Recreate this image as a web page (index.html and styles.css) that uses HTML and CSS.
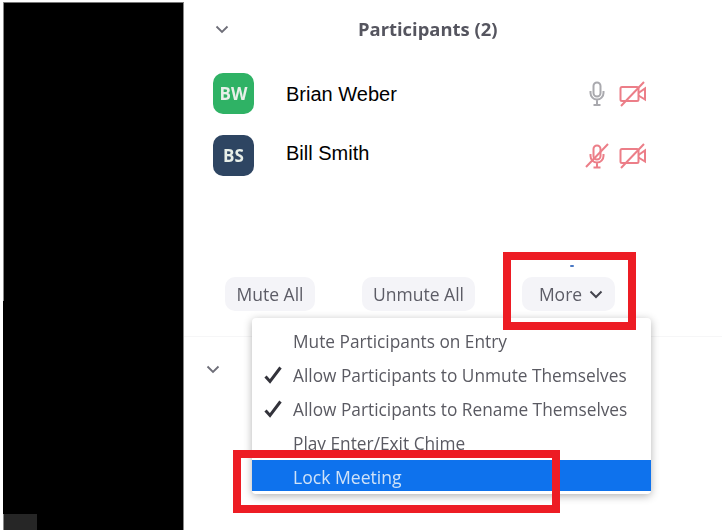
FILE: index.html
```html
<!DOCTYPE html>
<html lang="en">
  <head>
    <meta charset="UTF-8" />
    <title>Participants</title>
    <link rel="stylesheet" href="styles.css">
  </head>
  <body>
    <div class="redacted">
      <div class="redacted-edge"></div>
      <div class="redacted-corner"></div>
    </div>

    <div class="panel">
      <div class="panel-header">
        <svg class="chevron" width="14" height="9" viewBox="0 0 14 9"><path d="M1.5 1.5 7 7l5.5-5.5" /></svg>
        <span class="panel-title">Participants (2)</span>
      </div>

      <div class="participant participant-first">
        <div class="avatar avatar-green">BW</div>
        <span class="name">Brian Weber</span>
        <div class="status-icons">
          <svg width="24" height="26" viewBox="0 0 24 26" class="icon-mic">
            <rect x="8.500" y="1.500" width="7" height="14" rx="3.500" />
            <path d="M5.500 10v2a6.500 6.500 0 0 0 13 0v-2M12 18.500v5M8.500 24h7" />
          </svg>
          <svg width="28" height="26" viewBox="0 0 28 26" class="icon-off">
            <rect x="1.500" y="6" width="18" height="14" rx="1.500" />
            <path d="M19.500 12 26 7.500v11L19.500 14.500M2 25 25 1" />
          </svg>
        </div>
      </div>

      <div class="participant">
        <div class="avatar avatar-navy">BS</div>
        <span class="name name-second">Bill Smith</span>
        <div class="status-icons">
          <svg width="24" height="26" viewBox="0 0 24 26" class="icon-off">
            <rect x="8.500" y="2.500" width="7" height="14" rx="3.500" />
            <path d="M5.500 11v2a6.500 6.500 0 0 0 13 0v-2M12 19v5M8.500 24.500h7M1 24 23 1" />
          </svg>
          <svg width="28" height="26" viewBox="0 0 28 26" class="icon-off">
            <rect x="1.500" y="6" width="18" height="14" rx="1.500" />
            <path d="M19.500 12 26 7.500v11L19.500 14.500M2 25 25 1" />
          </svg>
        </div>
      </div>

      <div class="actions">
        <button class="btn btn-mute">Mute All</button>
        <button class="btn btn-unmute">Unmute All</button>
        <button class="btn btn-more">More
          <svg width="14" height="9" viewBox="0 0 14 9"><path d="M1.500 1.500 7 7l5.500-5.500" /></svg>
        </button>
      </div>

      <div class="divider"></div>
      <svg class="chevron chevron-chat" width="14" height="9" viewBox="0 0 14 9"><path d="M1.500 1.500 7 7l5.500-5.500" /></svg>
    </div>

    <div class="more-dot"></div>

    <div class="menu">
      <div class="menu-item">Mute Participants on Entry</div>
      <div class="menu-item">
        <svg class="check" width="18" height="18" viewBox="0 0 18 18"><path d="M1.500 10.500 6 15.500 16.500 1.500" /></svg>
        Allow Participants to Unmute Themselves
      </div>
      <div class="menu-item">
        <svg class="check" width="18" height="18" viewBox="0 0 18 18"><path d="M1.500 10.500 6 15.500 16.500 1.500" /></svg>
        Allow Participants to Rename Themselves
      </div>
      <div class="menu-item">Play Enter/Exit Chime</div>
      <div class="menu-item menu-item-active">Lock Meeting</div>
    </div>

    <div class="mark mark-more"></div>
    <div class="mark mark-lock"></div>
  </body>
</html>
```

FILE: styles.css
```css
html,
body {
  height: 100%;
}

body {
  margin: 0;
  display: flex;
  width: 722px;
  height: 530px;
  overflow: hidden;
  background-color: white;
  font-family: "Open Sans", "Liberation Sans", sans-serif;
}

/* blacked out video area */
.redacted {
  position: relative;
  flex: none;
  width: 180px;
  margin: 2px 0 0 3px;
  border-top: 1px solid #777;
  border-right: 1px solid #888;
  background-color: black;
}

.redacted-edge {
  position: absolute;
  left: 0;
  top: -1px;
  width: 1px;
  height: 299px;
  background-color: #888;
}

.redacted-corner {
  position: absolute;
  left: 0;
  bottom: 0;
  width: 33px;
  height: 16px;
  border-left: 1px solid #888;
  background-color: #262626;
}

.panel {
  position: relative;
  flex: 1;
  padding-top: 16px;
}

.panel-header {
  display: flex;
  align-items: center;
  height: 26px;
  padding-left: 31px;
}

.panel-title {
  margin-left: 129px;
  margin-top: -2px;
  font-size: 18.400px;
  font-weight: 700;
  color: #55555f;
  filter: blur(0.6px);
}

.chevron {
  flex: none;
  fill: none;
  stroke: #6e6e78;
  stroke-width: 1.8;
}

.participant {
  display: flex;
  align-items: center;
  height: 42px;
  margin-top: 20px;
  padding-left: 29px;
}

.participant-first {
  margin-top: 30px;
}

.avatar {
  display: flex;
  flex: none;
  align-items: center;
  justify-content: center;
  width: 41px;
  height: 41px;
  border-radius: 10px;
  font-size: 17px;
  font-weight: 700;
  color: #e8efe9;
  filter: blur(0.6px);
}

.avatar-green {
  background-color: #2fb265;
}

.avatar-navy {
  background-color: #2e4562;
}

.name {
  margin-left: 32px;
  margin-top: 2px;
  font-family: "Liberation Sans", Arial, sans-serif;
  font-size: 20px;
  color: black;
}

.name-second {
  margin-top: -4px;
}

.status-icons {
  display: flex;
  align-items: center;
  gap: 10px;
  margin-top: 2px;
  margin-left: auto;
  margin-right: 75px;
  filter: blur(0.6px);
}

.status-icons svg {
  fill: none;
  stroke-width: 2;
}

.icon-mic {
  stroke: #a9a9ae;
  stroke-width: 2.500;
}

.icon-off {
  stroke: #ec7e88;
}

.actions {
  display: flex;
  margin-top: 101px;
  padding-left: 41px;
}

.btn {
  display: flex;
  align-items: center;
  justify-content: center;
  gap: 7px;
  height: 34px;
  padding: 0;
  border: 0;
  border-radius: 10px;
  background-color: #f4f4f8;
  font-family: "Open Sans", "Liberation Sans", sans-serif;
  font-size: 17.500px;
  color: #5c5c66;
  filter: blur(0.6px);
}

.btn svg {
  fill: none;
  stroke: #44444e;
  stroke-width: 2;
}

.btn-mute {
  width: 90px;
}

.btn-unmute {
  width: 113px;
  margin-left: 47px;
}

.btn-more {
  width: 93px;
  margin-left: 47px;
  padding-left: 5px;
}

.divider {
  height: 1px;
  margin-top: 25px;
  background-color: #f6f6f7;
}

.chevron-chat {
  display: block;
  margin: 28px 0 0 22px;
}

.more-dot {
  position: absolute;
  left: 570px;
  top: 265px;
  width: 4px;
  height: 2px;
  border-radius: 1px;
  background-color: #4a78c4;
}

/* dropdown over the panel */
.menu {
  position: absolute;
  left: 252px;
  top: 318px;
  width: 399px;
  height: 176px;
  box-sizing: border-box;
  padding-top: 7px;
  border-radius: 4px;
  background-color: white;
  box-shadow: 0 2px 8px rgba(0, 0, 0, 0.3);
}

.menu-item {
  position: relative;
  height: 34px;
  padding-left: 41px;
  font-size: 17.300px;
  line-height: 33px;
  white-space: nowrap;
  color: #5a5a62;
  filter: blur(0.6px);
}

.check {
  position: absolute;
  left: 12px;
  top: 7px;
  fill: none;
  stroke: #33333b;
  stroke-width: 3;
}

.menu-item-active {
  height: 31px;
  margin-top: -1px;
  line-height: 35px;
  font-size: 17.600px;
  background-color: #0e72ed;
  color: #cfe2f8;
}

/* red annotations drawn on the screenshot */
.mark {
  position: absolute;
  box-sizing: border-box;
  border: 8px solid #ed1c24;
}

.mark-more {
  left: 503px;
  top: 252px;
  width: 133px;
  height: 78px;
}

.mark-lock {
  left: 233px;
  top: 450px;
  width: 327px;
  height: 63px;
}
```
